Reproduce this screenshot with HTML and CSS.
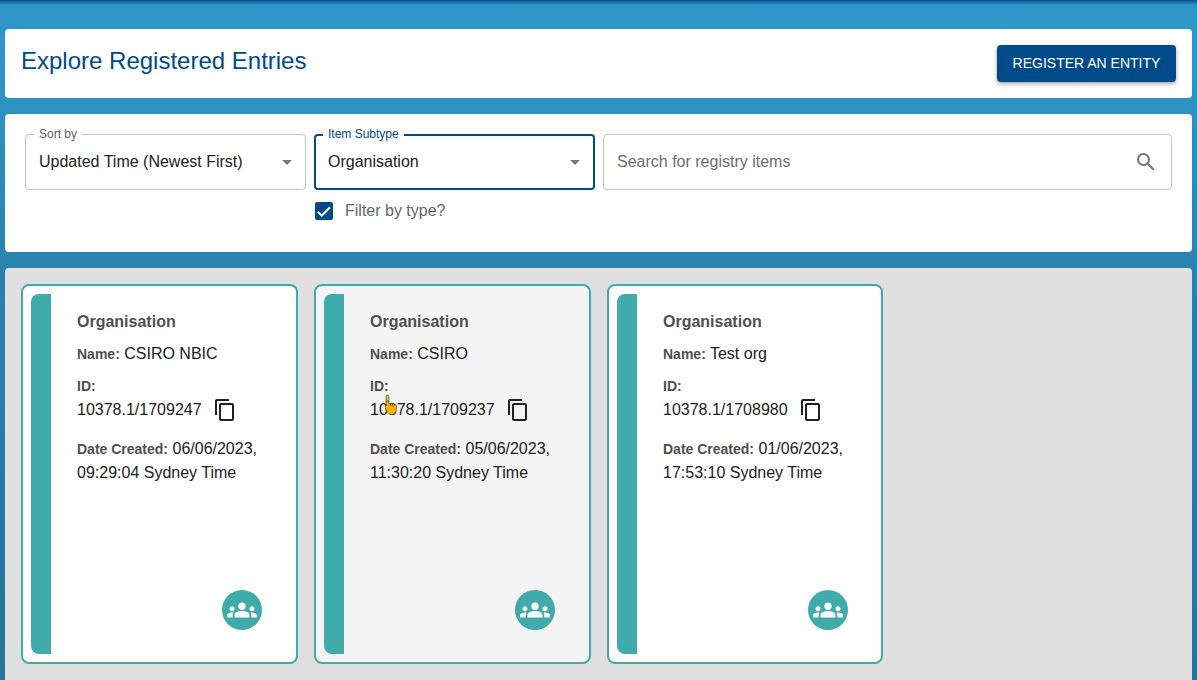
FILE: index.html
```html
<!DOCTYPE html>
<html>
<head>
    <title>Explore Registered Entries</title>
    <link rel="stylesheet" href="styles.css">
</head>
<body>
    <div class="panel header">
        <h1>Explore Registered Entries</h1>
        <button class="register">REGISTER AN ENTITY</button>
    </div>

    <div class="panel filters">
        <div class="sort-col">
            <div class="field">
                <span class="legend">Sort by</span>
                <span class="value">Updated Time (Newest First)</span>
                <span class="arrow"></span>
            </div>
        </div>
        <div class="type-col">
            <div class="field active">
                <span class="legend">Item Subtype</span>
                <span class="value">Organisation</span>
                <span class="arrow"></span>
            </div>
            <label class="check">
                <span class="box">
                    <svg viewBox="0 0 24 24" width="18" height="18"><path d="M9 16.2 4.8 12l-1.9 1.9L9 20 21 8l-1.9-1.9z" fill="#fff"/></svg>
                </span>
                Filter by type?
            </label>
        </div>
        <div class="search-col">
            <div class="field search">
                <span class="placeholder">Search for registry items</span>
                <svg viewBox="0 0 24 24" width="24" height="24"><path d="M15.5 14h-.79l-.28-.27A6.47 6.47 0 0 0 16 9.5 6.5 6.5 0 1 0 9.5 16c1.61 0 3.09-.59 4.23-1.57l.27.28v.79l5 4.99L20.49 19l-4.99-5zm-6 0C7.01 14 5 11.99 5 9.5S7.01 5 9.5 5 14 7.01 14 9.5 11.99 14 9.5 14z" fill="#757575"/></svg>
            </div>
        </div>
    </div>

    <div class="results">
        <div class="card">
            <div class="stripe"></div>
            <div class="info">
                <h2>Organisation</h2>
                <p class="line"><b>Name:</b> CSIRO NBIC</p>
                <p class="id-label"><b>ID:</b></p>
                <p class="id-row">10378.1/1709247
                    <svg class="copy" viewBox="0 0 24 24" width="24" height="24"><path d="M16 1H4c-1.100 0-2 .9-2 2v14h2V3h12V1zm3 4H8c-1.100 0-2 .9-2 2v14c0 1.100.9 2 2 2h11c1.100 0 2-.9 2-2V7c0-1.100-.9-2-2-2zm0 16H8V7h11v14z"/></svg>
                </p>
                <div class="date">
                    <div><b>Date Created:</b> <span>06/06/2023,</span></div>
                    <div>09:29:04 Sydney Time</div>
                </div>
            </div>
            <div class="badge">
                <svg viewBox="0 0 24 24" width="30" height="30"><path d="M12 12.75c1.63 0 3.07.39 4.24.9 1.08.48 1.76 1.56 1.76 2.73V18H6v-1.61c0-1.18.68-2.26 1.76-2.73 1.17-.52 2.61-.91 4.24-.91zM4 13c1.100 0 2-.9 2-2s-.9-2-2-2-2 .9-2 2 .9 2 2 2zm1.130 1.100C4.760 14.040 4.390 14 4 14c-.99 0-1.930.21-2.780.58C.48 14.900 0 15.620 0 16.430V18h4.500v-1.610c0-.83.23-1.610.63-2.290zM20 13c1.100 0 2-.9 2-2s-.9-2-2-2-2 .9-2 2 .9 2 2 2zm4 3.430c0-.81-.48-1.530-1.220-1.850C21.930 14.210 20.990 14 20 14c-.39 0-.76.04-1.130.1.4.68.63 1.460.63 2.290V18H24v-1.570zM12 6c1.660 0 3 1.340 3 3s-1.340 3-3 3-3-1.340-3-3 1.340-3 3-3z" fill="#fff"/></svg>
            </div>
        </div>

        <div class="card hovered">
            <div class="stripe"></div>
            <div class="info">
                <h2>Organisation</h2>
                <p class="line"><b>Name:</b> CSIRO</p>
                <p class="id-label"><b>ID:</b></p>
                <p class="id-row">10378.1/1709237
                    <svg class="copy" viewBox="0 0 24 24" width="24" height="24"><path d="M16 1H4c-1.100 0-2 .9-2 2v14h2V3h12V1zm3 4H8c-1.100 0-2 .9-2 2v14c0 1.100.9 2 2 2h11c1.100 0 2-.9 2-2V7c0-1.100-.9-2-2-2zm0 16H8V7h11v14z"/></svg>
                </p>
                <div class="date">
                    <div><b>Date Created:</b> <span>05/06/2023,</span></div>
                    <div>11:30:20 Sydney Time</div>
                </div>
            </div>
            <div class="badge">
                <svg viewBox="0 0 24 24" width="30" height="30"><path d="M12 12.75c1.63 0 3.07.39 4.24.9 1.08.48 1.76 1.56 1.76 2.73V18H6v-1.61c0-1.18.68-2.26 1.76-2.73 1.17-.52 2.61-.91 4.24-.91zM4 13c1.100 0 2-.9 2-2s-.9-2-2-2-2 .9-2 2 .9 2 2 2zm1.130 1.100C4.760 14.040 4.390 14 4 14c-.99 0-1.930.21-2.780.58C.48 14.900 0 15.620 0 16.430V18h4.500v-1.610c0-.83.23-1.610.63-2.290zM20 13c1.100 0 2-.9 2-2s-.9-2-2-2-2 .9-2 2 .9 2 2 2zm4 3.430c0-.81-.48-1.530-1.220-1.850C21.930 14.210 20.990 14 20 14c-.39 0-.76.04-1.130.1.4.68.63 1.460.63 2.290V18H24v-1.570zM12 6c1.660 0 3 1.340 3 3s-1.340 3-3 3-3-1.340-3-3 1.340-3 3-3z" fill="#fff"/></svg>
            </div>
            <svg class="cursor" viewBox="0 0 14 22" width="14" height="22">
                <path d="M2.500 1c.8 0 1.300.6 1.300 1.400V8H1.200V2.400C1.200 1.600 1.700 1 2.500 1z" fill="#d8c88a" stroke="#4a3a10" stroke-width=".7"/>
                <path d="M1.200 7h2.600v3l1.200-.5.300 2 .3-2.300c.7-.2 1.200 0 1.400.5l.2 1.900.3-1.700c.7-.2 1.200 0 1.400.5l.2 1.600.3-1.300c1-.1 1.800.3 1.900 1.300v3.200c0 2.900-2.100 5.300-5 5.300-2.300 0-3.600-1.200-4.500-2.800L.2 13.500c-.3-.7 0-1.400.4-1.600l.6-.2z" fill="#f7b500" stroke="#6a4c00" stroke-width=".7"/>
            </svg>
        </div>

        <div class="card short">
            <div class="stripe"></div>
            <div class="info">
                <h2>Organisation</h2>
                <p class="line"><b>Name:</b> Test org</p>
                <p class="id-label"><b>ID:</b></p>
                <p class="id-row">10378.1/1708980
                    <svg class="copy" viewBox="0 0 24 24" width="24" height="24"><path d="M16 1H4c-1.100 0-2 .9-2 2v14h2V3h12V1zm3 4H8c-1.100 0-2 .9-2 2v14c0 1.100.9 2 2 2h11c1.100 0 2-.9 2-2V7c0-1.100-.9-2-2-2zm0 16H8V7h11v14z"/></svg>
                </p>
                <div class="date">
                    <div><b>Date Created:</b> <span>01/06/2023,</span></div>
                    <div>17:53:10 Sydney Time</div>
                </div>
            </div>
            <div class="badge">
                <svg viewBox="0 0 24 24" width="30" height="30"><path d="M12 12.75c1.63 0 3.07.39 4.24.9 1.08.48 1.76 1.56 1.76 2.73V18H6v-1.61c0-1.18.68-2.26 1.76-2.73 1.17-.52 2.61-.91 4.24-.91zM4 13c1.100 0 2-.9 2-2s-.9-2-2-2-2 .9-2 2 .9 2 2 2zm1.130 1.100C4.760 14.040 4.390 14 4 14c-.99 0-1.930.21-2.780.58C.48 14.900 0 15.620 0 16.430V18h4.500v-1.610c0-.83.23-1.610.63-2.290zM20 13c1.100 0 2-.9 2-2s-.9-2-2-2-2 .9-2 2 .9 2 2 2zm4 3.430c0-.81-.48-1.530-1.220-1.850C21.930 14.210 20.990 14 20 14c-.39 0-.76.04-1.130.1.4.68.63 1.460.63 2.290V18H24v-1.570zM12 6c1.660 0 3 1.340 3 3s-1.340 3-3 3-3-1.340-3-3 1.340-3 3-3z" fill="#fff"/></svg>
            </div>
        </div>
    </div>
</body>
</html>
```

FILE: styles.css
```css
html{
    height: 100%;
}
body{
    margin: 0;
    height: 680px;
    overflow: hidden;
    box-sizing: border-box;
    padding: 29px 5px 0 5px;
    font-family: "Liberation Sans", Arial, sans-serif;
    color: #212121;
    background: linear-gradient(to bottom, #0a4f8a 0, #2c96c8 5px, #2e98c8 40px, #2a80aa 300px, #26749c 680px);
}
.panel{
    background-color: #fff;
    border-radius: 4px;
}
.header{
    height: 69px;
    display: flex;
    justify-content: space-between;
    padding: 16px 16px 0 16px;
    box-sizing: border-box;
    margin-bottom: 16px;
}
h1{
    margin: 0;
    font-size: 24px;
    line-height: 32px;
    font-weight: 400;
    color: #004b87;
}
.register{
    width: 179px;
    height: 37px;
    background-color: #004b87;
    color: #fff;
    border: none;
    border-radius: 4px;
    font-family: "Liberation Sans", Arial, sans-serif;
    font-size: 14px;
    box-shadow: 0 2px 4px rgba(0, 0, 0, 0.35);
    padding: 0 0 2px 0;
}
.filters{
    height: 138px;
    box-sizing: border-box;
    display: flex;
    gap: 8px;
    padding: 20px 20px 0 20px;
    margin-bottom: 16px;
}
.sort-col, .type-col{
    width: 281px;
}
.search-col{
    flex: 1;
}
.field{
    position: relative;
    height: 56px;
    box-sizing: border-box;
    border: 1px solid #c4c4c4;
    border-radius: 4px;
    display: flex;
    align-items: center;
    padding: 0 13px;
    font-size: 16px;
}
.field.active{
    border: 2px solid #004b87;
    padding: 0 12px;
}
.legend{
    position: absolute;
    top: -8px;
    left: 8px;
    background-color: #fff;
    padding: 0 5px;
    font-size: 12px;
    line-height: 14px;
    color: #5f5f5f;
}
.active .legend{
    left: 7px;
    top: -9px;
    color: #004b87;
}
.arrow{
    position: absolute;
    right: 13px;
    top: 25px;
    width: 0;
    height: 0;
    border-left: 5px solid transparent;
    border-right: 5px solid transparent;
    border-top: 5px solid #757575;
}
.active .arrow{
    right: 13px;
    top: 24px;
}
.search{
    justify-content: space-between;
    padding-right: 13px;
}
.placeholder{
    color: #6e6e6e;
}
.check{
    display: flex;
    align-items: center;
    gap: 12px;
    margin-top: 11px;
    font-size: 16px;
    line-height: 20px;
    color: #666;
}
.box{
    width: 18px;
    height: 18px;
    background-color: #004b87;
    border-radius: 2px;
    margin-left: 1px;
    display: flex;
}
.results{
    height: 420px;
    background-color: #e0e0e0;
    border-radius: 4px 4px 0 0;
    padding: 16px;
    box-sizing: border-box;
    display: flex;
    gap: 16px;
    align-items: flex-start;
}
.card{
    position: relative;
    width: 277px;
    height: 380px;
    box-sizing: border-box;
    background-color: #fff;
    border: 2px solid #41abac;
    border-radius: 8px;
    padding: 8px;
    display: flex;
}
.short{
    width: 276px;
}
.hovered{
    background-color: #f4f4f4;
}
.stripe{
    width: 20px;
    height: 360px;
    background-color: #41abac;
    border-radius: 8px 0 0 8px;
    flex-shrink: 0;
}
.info{
    padding: 16px 0 0 26px;
    font-size: 16px;
    line-height: 24px;
}
h2{
    margin: 0 0 8px 0;
    font-size: 16px;
    line-height: 24px;
    color: #505050;
}
.info p{
    margin: 0;
}
.info b{
    font-size: 14px;
    color: #505050;
}
.line{
    margin-bottom: 8px !important;
}
.id-row{
    display: flex;
    align-items: center;
    gap: 11px;
    margin-bottom: 15px !important;
}
.copy{
    fill: #212121;
}
.badge{
    position: absolute;
    right: 34px;
    bottom: 32px;
    width: 40px;
    height: 40px;
    border-radius: 50%;
    background-color: #41abac;
    display: flex;
    align-items: center;
    justify-content: center;
}
.short .badge{
    right: 33px;
}
.cursor{
    position: absolute;
    left: 69px;
    top: 108px;
}
```
